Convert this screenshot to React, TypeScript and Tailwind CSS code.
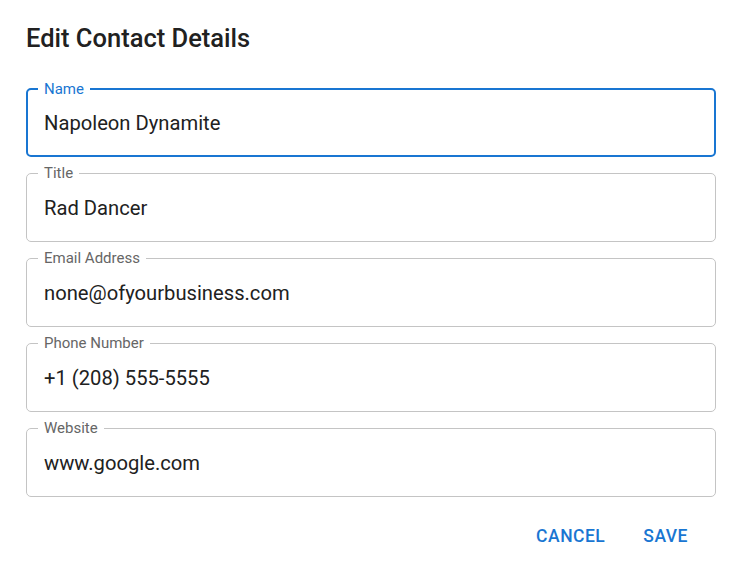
import React from 'react'

// ============================================================================
// TYPES
// ============================================================================

interface FieldProps {
  label: string
  value: string
  focused?: boolean
}

const FIELDS: FieldProps[] = [
  { label: 'Name', value: 'Napoleon Dynamite', focused: true },
  { label: 'Title', value: 'Rad Dancer' },
  { label: 'Email Address', value: 'none@ofyourbusiness.com' },
  { label: 'Phone Number', value: '+1 (208) 555-5555' },
  { label: 'Website', value: 'www.google.com' },
]

// ============================================================================
// OUTLINED FIELD
// ============================================================================

/**
 * Outlined text field with notched label (fieldset + legend)
 */
function OutlinedField({ label, value, focused }: FieldProps) {
  return (
    <fieldset
      className={`
        rounded-[5px]
        px-[11px]
        ${focused ? 'border-2 border-[#1976d2]' : 'border border-[#c4c4c4]'}
      `}
    >
      <legend
        className={`
          px-[6px]
          text-[15px]
          leading-[16px]
          ${focused ? 'ml-[-1px] text-[#1976d2]' : 'text-[#666666]'}
        `}
      >
        {label}
      </legend>
      <div
        className={`
          flex
          items-center
          px-[6px]
          text-[20.2px]
          text-[#212121]
          ${focused ? 'ml-[-1px] h-[58px] pb-[5px]' : 'h-[60px] pb-[6px]'}
        `}
      >
        {value}
      </div>
    </fieldset>
  )
}

// ============================================================================
// COMPONENT
// ============================================================================

export default function App() {
  return (
    <div
      className="h-[588px] w-[742px] bg-white"
      style={{ fontFamily: 'Roboto, "Liberation Sans", sans-serif' }}
    >
      {/* Title */}
      <div className="px-[26px] pt-[18px]">
        <h2 className="h-[40px] text-[25.5px] font-medium leading-[40px] text-[#212121]">
          Edit Contact Details
        </h2>
      </div>

      {/* Fields */}
      <div className="flex flex-col gap-[8px] px-[26px] pt-[23px]">
        {FIELDS.map((field) => (
          <OutlinedField key={field.label} {...field} />
        ))}
      </div>

      {/* Actions */}
      <div className="flex justify-end gap-[18px] pr-[44px] pt-[17px]">
        <button className="h-[45px] rounded px-[10px] text-[17.5px] font-medium uppercase tracking-[0.5px] text-[#1976d2]">
          Cancel
        </button>
        <button className="h-[45px] rounded px-[10px] text-[17.5px] font-medium uppercase tracking-[0.5px] text-[#1976d2]">
          Save
        </button>
      </div>
    </div>
  )
}
